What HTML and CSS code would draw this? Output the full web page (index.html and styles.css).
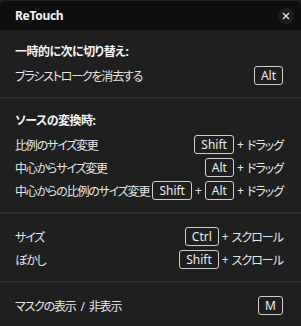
FILE: index.html
```html
<!DOCTYPE html>
<html lang="ja">
<head>
    <meta charset="UTF-8">
    <title>ReTouch</title>
    <link rel="stylesheet" href="styles.css">
</head>
<body>
<div class="panel">
    <div class="titlebar">
        <span class="title">ReTouch</span>
        <span class="close">
            <svg width="8" height="8" viewBox="0 0 8 8"><path d="M1 1L7 7M7 1L1 7" stroke="#e8e8e8" stroke-width="1.3" fill="none"/></svg>
        </span>
    </div>
    <div class="section">
        <div class="heading">一時的に次に切り替え:</div>
        <div class="row">
            <span class="label">ブラシストロークを消去する</span>
            <span class="keys"><kbd>Alt</kbd></span>
        </div>
    </div>
    <div class="section">
        <div class="heading">ソースの変換時:</div>
        <div class="row">
            <span class="label">比例のサイズ変更</span>
            <span class="keys"><kbd>Shift</kbd><i>+</i><span class="act">ドラッグ</span></span>
        </div>
        <div class="row">
            <span class="label">中心からサイズ変更</span>
            <span class="keys"><kbd>Alt</kbd><i>+</i><span class="act">ドラッグ</span></span>
        </div>
        <div class="row">
            <span class="label">中心からの比例のサイズ変更</span>
            <span class="keys"><kbd>Shift</kbd><i>+</i><kbd>Alt</kbd><i>+</i><span class="act">ドラッグ</span></span>
        </div>
    </div>
    <div class="section">
        <div class="row">
            <span class="label">サイズ</span>
            <span class="keys"><kbd>Ctrl</kbd><i>+</i><span class="act">スクロール</span></span>
        </div>
        <div class="row">
            <span class="label">ぼかし</span>
            <span class="keys"><kbd>Shift</kbd><i>+</i><span class="act">スクロール</span></span>
        </div>
    </div>
    <div class="section">
        <div class="row">
            <span class="label">マスクの表示 / 非表示</span>
            <span class="keys"><kbd>M</kbd></span>
        </div>
    </div>
</div>
</body>
</html>
```

FILE: styles.css
```css
html, body {
    margin: 0;
    padding: 0;
    background: #1f1f1f;
}
.panel {
    width: 301px;
    height: 326px;
    overflow: hidden;
    background: #1f1f1f;
    color: #e6e6e6;
    font-family: "Noto Sans", "Noto Sans CJK JP", sans-serif;
    font-size: 12px;
    font-feature-settings: "palt";
    border-radius: 6px 6px 0 0;
    white-space: nowrap;
}
.titlebar {
    height: 30px;
    background: #0e0e0e;
    display: flex;
    align-items: center;
    justify-content: space-between;
    padding: 0 15px;
    border-top: 1px solid #222;
    box-sizing: border-box;
    border-radius: 6px 6px 0 0;
}
.title {
    color: #f4f4f4;
    font-weight: bold;
    font-size: 12px;
    letter-spacing: -0.3px;
}
.close {
    width: 16px;
    height: 16px;
    border-radius: 50%;
    background: #1d1d1d;
    display: flex;
    align-items: center;
    justify-content: center;
    margin-right: -8px;
}
.section {
    padding: 11px 18px 10px 15px;
    border-bottom: 2px solid #2c2c2c;
}
.section:last-child {
    border-bottom: 0;
}
.heading {
    height: 22px;
    line-height: 22px;
    margin-bottom: 1px;
    font-weight: bold;
    color: #f4f4f4;
    letter-spacing: -0.5px;
}
.row {
    height: 23px;
    display: flex;
    align-items: center;
    justify-content: space-between;
}
.label {
    flex-shrink: 0;
    letter-spacing: -1.2px;
    word-spacing: 3px;
}
.keys {
    display: flex;
    align-items: center;
    flex-shrink: 0;
}
.act {
    letter-spacing: -1px;
}
kbd {
    font-family: "Noto Sans", sans-serif;
    font-size: 12px;
    height: 19px;
    line-height: 17px;
    padding: 0 6px;
    border: 1px solid #cfcfcf;
    border-radius: 3px;
    box-sizing: border-box;
    color: #ececec;
}
.keys i {
    font-style: normal;
    margin: 0 3px;
}
```
